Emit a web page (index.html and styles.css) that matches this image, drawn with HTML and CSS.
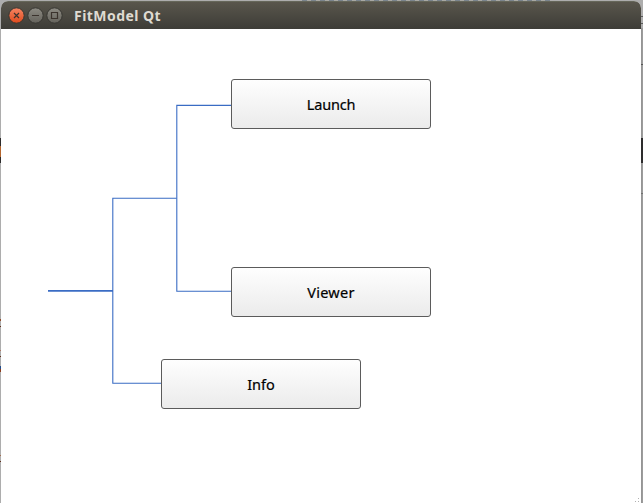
FILE: index.html
```html
<!DOCTYPE html>
<html lang="en">
<head>
<meta charset="utf-8">
<title>FitModel Qt</title>
<link rel="stylesheet" href="styles.css">
</head>
<body>
<div class="desktop">
  <main class="window">
    <header class="titlebar">
      <svg class="controls" width="64" height="28" viewBox="0 0 64 28">
        <defs>
          <linearGradient id="close" x1="0" y1="0" x2="0" y2="1"><stop offset="0" stop-color="#f58563"/><stop offset="1" stop-color="#df4a1c"/></linearGradient>
          <linearGradient id="gray" x1="0" y1="0" x2="0" y2="1"><stop offset="0" stop-color="#8c8a82"/><stop offset="1" stop-color="#65635c"/></linearGradient>
        </defs>
        <g stroke="#373631" stroke-width="1">
          <circle cx="15.5" cy="14.5" r="7.7" fill="url(#close)"/>
          <circle cx="34.5" cy="14.5" r="7.7" fill="url(#gray)"/>
          <circle cx="53.5" cy="14.5" r="7.7" fill="url(#gray)"/>
        </g>
        <g fill="none" stroke="#3b332d" stroke-width="1.2">
          <path d="M13 12l5 5M18 12l-5 5"/>
          <path d="M31 14.5h7"/>
          <path d="M50.5 11.5h6v6h-6z"/>
        </g>
      </svg>
      <h1 class="title">FitModel Qt</h1>
    </header>
    <section class="canvas">
      <svg class="links" width="640" height="475" viewBox="1 28 640 475" fill="none" stroke="#3a6cc4">
        <path d="M48 290.9h65" stroke-width="1.7"/>
        <path d="M161 383.3h-48.2V198.3h63.9" stroke-width="1.1"/>
        <path d="M231 105.4h-54.2v185.9H231" stroke-width="1.1"/>
      </svg>
      <button class="node launch">Launch</button>
      <button class="node viewer">Viewer</button>
      <button class="node info">Info</button>
      <svg class="grip" width="4" height="4" fill="#b0b0b0"><path d="M3 0h1v1H3zM0 3h1v1H0zM3 3h1v1H3z"/></svg>
    </section>
  </main>
</div>
</body>
</html>
```
FILE: styles.css
```css
body {
  margin: 0;
  overflow: hidden;
}

.desktop {
  box-sizing: border-box;
  width: 643px;
  height: 503px;
  padding: 1px 2px 0 1px;
  background:
    repeating-linear-gradient(90deg, #7b858e 0 5px, #a8a8a4 5px 9px) 302px 0 / 248px 1px no-repeat,
    linear-gradient(#b4652e, #b4652e) 0 146px / 1px 11px no-repeat,
    linear-gradient(#2c2b2b, #2c2b2b) 0 138px / 1px 25px no-repeat,
    linear-gradient(#914d2d, #914d2d) 0 319px / 1px 2px no-repeat,
    linear-gradient(#5d2d19, #5d2d19) 0 326px / 1px 1px no-repeat,
    linear-gradient(#ad7764, #ad7764) 0 350px / 1px 1px no-repeat,
    linear-gradient(#5d2d19, #5d2d19) 0 356px / 1px 1px no-repeat,
    linear-gradient(#234d8c 50%, #8c3c1c 50%) 0 366px / 1px 6px no-repeat,
    linear-gradient(#a36c4d, #a36c4d) 0 455px / 1px 1px no-repeat,
    linear-gradient(#5d2d19, #5d2d19) 0 461px / 1px 1px no-repeat,
    linear-gradient(#5a5a5a, #5a5a5a) 641px 16px / 2px 1px no-repeat,
    linear-gradient(#5a5a5a, #5a5a5a) 641px 23px / 2px 1px no-repeat,
    linear-gradient(#555, #555) 641px 64px / 2px 1px no-repeat,
    linear-gradient(#2d2c2d, #2d2c2d) 641px 138px / 2px 25px no-repeat,
    linear-gradient(#707070, #707070) 641px 193px / 2px 1px no-repeat,
    linear-gradient(90deg, #919191, #a0a0a0) 641px 28px / 2px 475px no-repeat,
    #adadad;
}

.window {
  display: flex;
  flex-direction: column;
  height: 502px;
  border-radius: 7px 7px 0 0;
  overflow: hidden;
  background: #fff;
}

.titlebar {
  box-sizing: border-box;
  display: flex;
  flex: none;
  height: 28px;
  border-top: 1px solid #66675a;
  background: linear-gradient(#59564c, #3d3c37);
}

.controls {
  flex: none;
  margin-top: -1px;
}

.title {
  margin: 0 0 0 9px;
  color: #dfdbd2;
  font: bold 14px/28px "Noto Sans", sans-serif;
  letter-spacing: 0.45px;
  white-space: nowrap;
}

.canvas {
  position: relative;
  flex: 1;
}

.links {
  position: absolute;
  left: 0;
  top: -1px;
}

.node {
  position: absolute;
  box-sizing: border-box;
  width: 200px;
  height: 50px;
  padding: 0;
  border: 1px solid #5b5b5b;
  border-radius: 3px;
  background: linear-gradient(#fefefe, #ebebeb);
  color: #000;
  font: 14.5px/48px "Noto Sans", sans-serif;
  -webkit-text-stroke: 0.2px #000;
}

.launch { left: 230px; top: 50px; letter-spacing: -0.2px; }
.viewer { left: 230px; top: 238px; letter-spacing: 0.3px; }
.info { left: 160px; top: 330px; }

.grip {
  position: absolute;
  right: 2px;
  bottom: 1px;
}
```
